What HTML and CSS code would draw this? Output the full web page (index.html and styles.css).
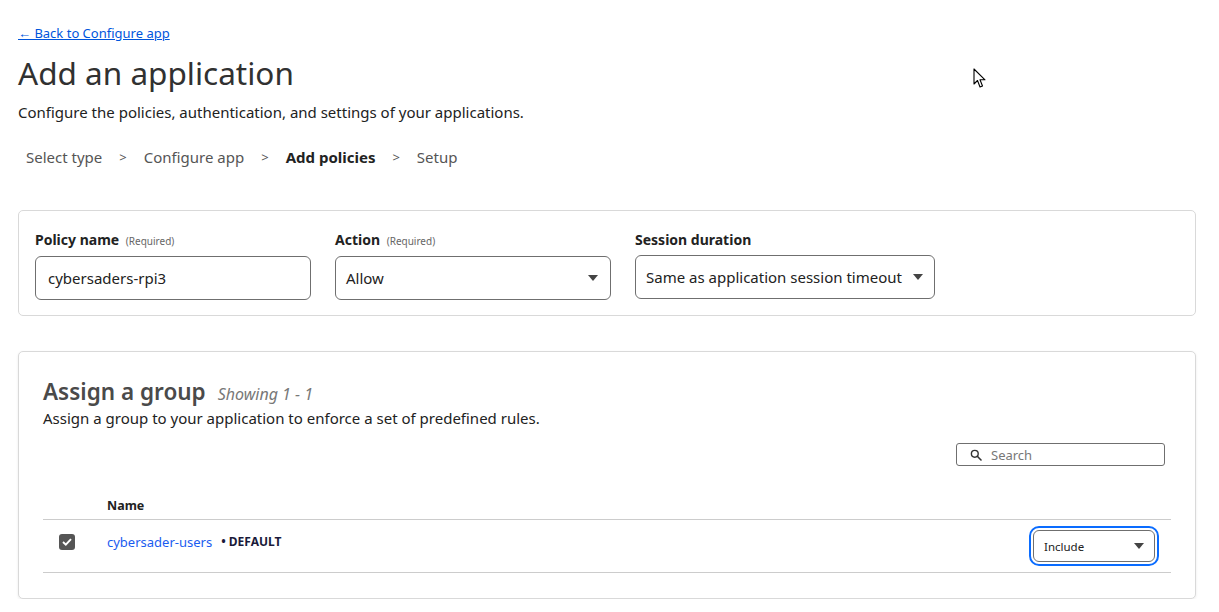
FILE: index.html
```html
<!DOCTYPE html>
<html>
<head>
<meta charset="utf-8">
<link rel="stylesheet" href="styles.css">
</head>
<body>
<div class="page">
  <a class="back" href="#">← Back to Configure app</a>
  <h1 class="title">Add an application</h1>
  <p class="subtitle">Configure the policies, authentication, and settings of your applications.</p>
  <nav class="steps">
    <span class="step">Select type</span><span class="sep">&gt;</span>
    <span class="step">Configure app</span><span class="sep">&gt;</span>
    <span class="step active">Add policies</span><span class="sep">&gt;</span>
    <span class="step">Setup</span>
  </nav>

  <section class="card policy">
    <div class="field f-name">
      <label class="lbl">Policy name <span class="req">(Required)</span></label>
      <div class="box">cybersaders-rpi3</div>
    </div>
    <div class="field f-action">
      <label class="lbl">Action <span class="req">(Required)</span></label>
      <div class="box select"><span>Allow</span><span class="caret"></span></div>
    </div>
    <div class="field f-session">
      <label class="lbl">Session duration</label>
      <div class="box select"><span>Same as application session timeout</span><span class="caret"></span></div>
    </div>
  </section>

  <section class="card groups">
    <div class="g-head">
      <h2 class="g-title">Assign a group</h2><span class="showing">Showing 1 - 1</span>
    </div>
    <p class="g-desc">Assign a group to your application to enforce a set of predefined rules.</p>
    <div class="search-row">
      <div class="search">
        <svg width="12" height="12" viewBox="0 0 12 12"><circle cx="4.8" cy="4.8" r="3.4" fill="none" stroke="#333" stroke-width="1.4"/><path d="M7.3 7.3 L11 11" stroke="#333" stroke-width="1.6" stroke-linecap="round"/></svg>
        <span>Search</span>
      </div>
    </div>
    <div class="table">
      <div class="thead"><span class="th-name">Name</span></div>
      <div class="trow">
        <span class="cb"><svg width="10" height="8" viewBox="0 0 10 8"><path d="M1 4 L3.8 6.6 L9 1.2" fill="none" stroke="#fff" stroke-width="1.9"/></svg></span>
        <a class="gname" href="#">cybersader-users</a>
        <span class="dflt">• DEFAULT</span>
        <div class="include-ring"><div class="include"><span>Include</span><span class="caret"></span></div></div>
      </div>
    </div>
  </section>
</div>
<svg class="cursor" width="14" height="21" viewBox="0 0 14 21"><path d="M1 1 L1 16 L4.5 12.5 L7 19 L9.5 18 L7 11.8 L12 11.8 Z" fill="#fff" stroke="#000" stroke-width="1.1" stroke-linejoin="round"/></svg>
</body>
</html>
```

FILE: styles.css
```css
* { box-sizing: border-box; }
html, body { margin: 0; padding: 0; background: #fff; }
body {
  font-family: "Noto Sans", "Open Sans", "Liberation Sans", sans-serif;
  color: #222;
  position: relative;
}
.page { padding: 24px 23px 0 18px; }
.back {
  display: block;
  font-size: 13px;
  color: #0055dc;
  text-decoration: underline;
  line-height: 18px;
}
.title {
  margin: 11px 0 0;
  font-size: 31.5px;
  font-weight: 400;
  color: #313131;
  line-height: 40px;
}
.subtitle {
  margin: 9px 0 0;
  font-size: 15px;
  line-height: 20px;
  color: #222;
}
.steps {
  display: flex;
  align-items: center;
  margin: 25px 0 0 8px;
  font-size: 15px;
  line-height: 20px;
  color: #555;
}
.sep { margin: 0 17px; font-size: 13px; color: #555; }
.step.active { font-weight: 700; color: #222; }

.card {
  border: 1px solid #d9d9d9;
  border-radius: 5px;
  background: #fff;
}
.policy {
  margin-top: 43px;
  height: 106px;
  display: flex;
  gap: 24px;
  padding: 20px 16px 0 16px;
}
.field { display: flex; flex-direction: column; }
.lbl {
  font-size: 14px;
  font-weight: 700;
  color: #222;
  line-height: 18px;
  margin-bottom: 6px;
}
.req { font-size: 10px; font-weight: 400; color: #666; margin-left: 3px; }
.box {
  height: 44px;
  border: 1px solid #6f6f6f;
  border-radius: 6px;
  display: flex;
  align-items: center;
  padding: 0 12px;
  font-size: 15px;
  color: #222;
}
.f-name .box, .f-action .box { width: 276px; }
.f-action .box { padding-left: 10px; }
.f-session .box { width: 300px; padding-left: 10px; padding-right: 11px; }
.select { justify-content: space-between; }
.caret {
  width: 0; height: 0;
  border-left: 5px solid transparent;
  border-right: 5px solid transparent;
  border-top: 6px solid #444;
}

.groups {
  margin-top: 35px;
  height: 248px;
  padding: 24px 24px 0 24px;
  box-shadow: 0 1px 3px rgba(0,0,0,0.08);
}
.g-head { display: flex; align-items: baseline; }
.g-title {
  margin: 0;
  font-size: 22.5px;
  font-weight: 600;
  color: #4a4a4a;
  line-height: 32px;
}
.showing { font-size: 16px; font-style: italic; color: #777; margin-left: 12px; }
.g-desc { margin: 0; font-size: 15px; color: #222; line-height: 20px; }
.search-row { display: flex; justify-content: flex-end; margin-top: 15px; padding-right: 6px; }
.search {
  width: 209px;
  height: 23px;
  border: 1px solid #6f6f6f;
  border-radius: 3px;
  display: flex;
  align-items: center;
  padding-left: 13px;
  gap: 9px;
  font-size: 13px;
  color: #777;
}
.table { margin-top: 28px; }
.thead {
  height: 26px;
  border-bottom: 1px solid #ccc;
  padding-left: 64px;
  font-size: 12.5px;
  font-weight: 700;
  color: #222;
  line-height: 24px;
}
.trow {
  height: 53px;
  border-bottom: 1px solid #ccc;
  display: flex;
  align-items: center;
  padding-left: 16px;
  padding-right: 12px;
}
.cb {
  width: 16px; height: 16px;
  background: #555;
  border-radius: 3px;
  display: flex; align-items: center; justify-content: center;
  margin-right: 32px;
  margin-bottom: 8px;
  flex-shrink: 0;
}
.gname { font-size: 13px; color: #1a5cf0; text-decoration: none; margin-bottom: 9px; }
.dflt { font-size: 12px; font-weight: 700; color: #1a1a3a; margin-left: 9px; margin-bottom: 9px; }
.include-ring {
  margin-left: auto;
  flex-shrink: 0;
  border: 2px solid #0a6cff;
  border-radius: 10px;
  padding: 2px;
}
.include {
  width: 122px;
  height: 32px;
  border: 1px solid #6f6f6f;
  border-radius: 6px;
  display: flex;
  align-items: center;
  justify-content: space-between;
  padding: 0 10px;
  font-size: 11.5px;
  color: #222;
}
.cursor { position: absolute; left: 973px; top: 68px; }
```
